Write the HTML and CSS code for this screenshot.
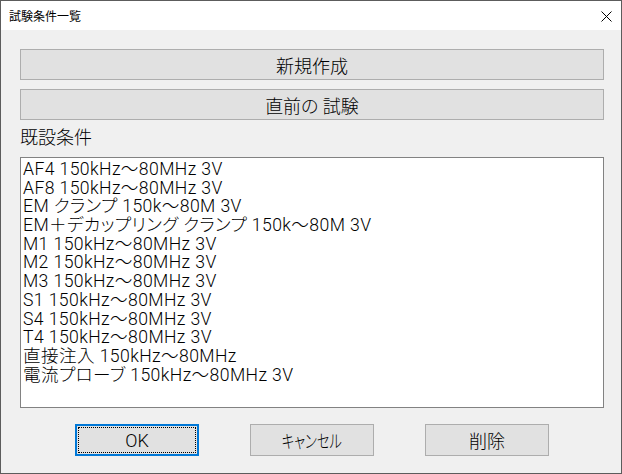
FILE: index.html
```html
<!DOCTYPE html>
<html lang="ja">
<head>
<meta charset="utf-8">
<title>試験条件一覧</title>
<link rel="stylesheet" href="styles.css">
</head>
<body>
<div class="window">
  <div class="titlebar">
    <span class="title">試験条件一覧</span>
    <span class="close">
      <svg width="11" height="11" viewBox="0 0 11 11"><path d="M0.5 0.5 L10.5 10.5 M10.5 0.5 L0.5 10.5" stroke="#000" stroke-width="1" fill="none"/></svg>
    </span>
  </div>
  <div class="content">
    <div class="btn wide">新規作成</div>
    <div class="btn wide second">直前の 試験</div>
    <div class="label">既設条件</div>
    <div class="list">
      <div class="item">AF4 150kHz～80MHz 3V</div>
      <div class="item">AF8 150kHz～80MHz 3V</div>
      <div class="item">EM クランプ 150k～80M 3V</div>
      <div class="item">EM＋デカップリング クランプ 150k～80M 3V</div>
      <div class="item">M1 150kHz～80MHz 3V</div>
      <div class="item">M2 150kHz～80MHz 3V</div>
      <div class="item">M3 150kHz～80MHz 3V</div>
      <div class="item">S1 150kHz～80MHz 3V</div>
      <div class="item">S4 150kHz～80MHz 3V</div>
      <div class="item">T4 150kHz～80MHz 3V</div>
      <div class="item">直接注入 150kHz～80MHz</div>
      <div class="item">電流プローブ 150kHz～80MHz 3V</div>
    </div>
    <div class="actions">
      <div class="btn small focused">OK</div>
      <div class="btn small"><span class="narrow">キャンセル</span></div>
      <div class="btn small">削除</div>
    </div>
  </div>
</div>
</body>
</html>
```
FILE: styles.css
```css
html, body {
  margin: 0;
  padding: 0;
  background: #f0f0f0;
}
.window {
  box-sizing: border-box;
  width: 622px;
  height: 474px;
  border: 1px solid #5c5c5c;
  background: #f0f0f0;
  display: flex;
  flex-direction: column;
  font-family: Roboto, "Noto Sans CJK JP", sans-serif;
  font-weight: 300;
  font-feature-settings: "palt";
  color: #000;
}
.titlebar {
  height: 29px;
  background: #fff;
  display: flex;
  align-items: center;
  justify-content: space-between;
  padding: 0 9px 0 8px;
}
.title {
  font-family: "Noto Sans CJK JP", sans-serif;
  font-weight: 400;
  font-feature-settings: normal;
  font-size: 12px;
  line-height: 14px;
  margin-top: 1px;
}
.close {
  display: flex;
  width: 11px;
  height: 11px;
  margin-top: 1px;
}
.content {
  flex: 1;
  display: flex;
  flex-direction: column;
  padding: 19px 17px 0 19px;
}
.btn {
  box-sizing: border-box;
  background: #e1e1e1;
  border: 1px solid #adadad;
  display: flex;
  align-items: center;
  justify-content: center;
  font-size: 18px;
}
.wide {
  height: 31px;
}
.second {
  margin-top: 9px;
}
.label {
  font-size: 18px;
  line-height: 26px;
  height: 26px;
  margin-top: 3px;
  margin-bottom: 8px;
  font-family: "Noto Sans CJK JP", sans-serif;
  font-feature-settings: normal;
}
.list {
  box-sizing: border-box;
  height: 251px;
  background: #fff;
  border: 1px solid #828282;
  padding: 2px 2px;
  font-size: 17.6px;
  letter-spacing: 0.4px;
}
.item {
  height: 18.7px;
  line-height: 18.7px;
  white-space: nowrap;
}
.actions {
  display: flex;
  justify-content: center;
  gap: 51px;
  margin-top: 16px;
}
.small {
  width: 124px;
  height: 32px;
}
.narrow {
  display: inline-block;
  transform: scaleX(0.74);
}
.focused {
  border: 2px solid #0078d7;
  outline: 1px dotted #000;
  outline-offset: -4px;
}
```
